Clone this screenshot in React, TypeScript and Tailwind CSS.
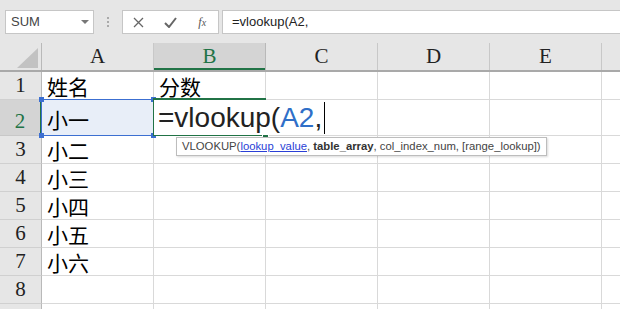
import React from "react";

const cols = ["A", "B", "C", "D", "E"];
const data: { n: string; a: string; b?: string }[] = [
  { n: "3", a: "小二" },
  { n: "4", a: "小三" },
  { n: "5", a: "小四" },
  { n: "6", a: "小五" },
  { n: "7", a: "小六" },
  { n: "8", a: "" },
];

const cjk = "font-['Noto_Sans_CJK_SC',sans-serif]";
const serif = "font-['Liberation_Serif','Noto_Sans_CJK_SC',serif]";

function Cell({ children, className = "" }: { children?: React.ReactNode; className?: string }) {
  return (
    <div className={`w-[112px] shrink-0 border-r border-b border-[#d9d9d9] bg-white flex items-end pl-[5px] text-[21px] leading-[26px] text-black ${cjk} ${className}`}>
      {children}
    </div>
  );
}

function RowHead({ n, active = false }: { n: string; active?: boolean }) {
  return (
    <div
      className={`w-[42px] shrink-0 flex items-end justify-center pb-[1px] text-[21px] leading-[26px] ${serif} border-b ${
        active
          ? "bg-[#d4d4d4] text-[#217346] border-r-2 border-r-[#217346] border-b-[#c8c8c8]"
          : "bg-[#e6e6e6] text-[#222] border-r border-r-[#b9b9b9] border-b-[#d0d0d0]"
      }`}
    >
      {n}
    </div>
  );
}

function Handle({ className }: { className: string }) {
  return <div className={`absolute w-[5px] h-[5px] bg-[#3c6fd1] ${className}`} />;
}

export default function App() {
  return (
    <div className="relative w-[620px] h-[309px] overflow-hidden bg-[#e6e6e6] font-['Liberation_Sans',sans-serif]">
      {/* Toolbar */}
      <div className="h-[43px] flex items-start pt-[10px]">
        <div className="ml-[5px] w-[89px] h-[24px] bg-white border border-[#c6c6c6] flex items-center justify-between pl-[5px] pr-[4px]">
          <span className="text-[13px] text-[#444]">SUM</span>
          <svg width="8" height="5" viewBox="0 0 8 5"><path d="M0 0h8L4 4z" fill="#777" /></svg>
        </div>
        <div className="w-[28px] h-[24px] flex flex-col items-center justify-center gap-[2px]">
          <div className="w-[2px] h-[2px] bg-[#aaa]" />
          <div className="w-[2px] h-[2px] bg-[#aaa]" />
          <div className="w-[2px] h-[2px] bg-[#aaa]" />
        </div>
        <div className="w-[97px] h-[24px] bg-white border border-[#c6c6c6] flex items-center">
          <div className="w-[32px] flex justify-center">
            <svg width="11" height="11" viewBox="0 0 11 11"><path d="M1 1l9 9M10 1l-9 9" stroke="#666" strokeWidth="1.3" /></svg>
          </div>
          <div className="w-[32px] flex justify-center">
            <svg width="13" height="11" viewBox="0 0 13 11"><path d="M1 6l4 4 7-9" stroke="#666" strokeWidth="2" fill="none" /></svg>
          </div>
          <div className="w-[32px] flex justify-center">
            <span className="font-['Liberation_Serif',serif] italic text-[12px] text-[#555]">f<span className="text-[10px]">x</span></span>
          </div>
        </div>
        <div className="ml-[3px] flex-1 h-[24px] bg-white border border-[#c6c6c6] border-r-0 flex items-center pl-[9px]">
          <span className="text-[13px] text-[#222]">=vlookup(A2,</span>
        </div>
      </div>

      {/* Column header */}
      <div className="flex h-[29px] border-b-2 border-[#a9a9a9]">
        <div className="w-[42px] shrink-0 border-r border-[#b9b9b9] relative">
          <svg className="absolute left-[17px] top-[5px]" width="21" height="20" viewBox="0 0 21 20"><path d="M21 0V20H0z" fill="#c2c2c2" /></svg>
        </div>
        {cols.map((c) => (
          <div
            key={c}
            className={`w-[112px] shrink-0 flex items-center justify-center text-[21px] ${serif} ${
              c === "B"
                ? "bg-[#d4d4d4] text-[#217346] border-r border-[#b9b9b9] shadow-[inset_0_-2px_0_#217346]"
                : "text-[#222] border-r border-[#c8c8c8]"
            }`}
          >
            {c}
          </div>
        ))}
        <div className="flex-1" />
      </div>

      {/* Row 1 */}
      <div className="flex h-[28px]">
        <RowHead n="1" />
        <Cell>姓名</Cell>
        <Cell>分数</Cell>
        <Cell />
        <Cell />
        <Cell />
        <div className="flex-1 bg-white border-b border-[#d9d9d9]" />
      </div>

      {/* Row 2 */}
      <div className="flex h-[36px]">
        <RowHead n="2" active />
        <Cell className="relative !bg-[#e8eef8] pb-[3px]">
          小一
          <div className="absolute -left-px -top-px right-[-1px] bottom-[-1px] border border-[#3c6fd1]" />
          <Handle className="-left-[3px] -top-[3px]" />
          <Handle className="-right-[3px] -top-[3px]" />
          <Handle className="-left-[3px] -bottom-[3px]" />
          <Handle className="-right-[3px] -bottom-[3px]" />
        </Cell>
        <Cell className="relative z-10 !pl-0">
          <div className="absolute -left-px -top-[2px] right-[-1px] bottom-[-1px] border-2 border-r-0 border-[#217346]" />
          <div className="absolute right-[-4px] bottom-[-4px] w-[7px] h-[7px] bg-[#217346] border border-white" />
          <div className="relative flex items-end h-full pl-[4px] bg-white pr-[2px] whitespace-nowrap font-['Liberation_Sans',sans-serif] text-[28px] leading-[34px] text-[#222]">
            <span>=vlookup(</span>
            <span className="text-[#2f6fc8]">A2</span>
            <span>,</span>
            <span className="ml-[2px] w-px h-[32px] bg-black self-center" />
          </div>
        </Cell>
        <Cell />
        <Cell />
        <Cell />
        <div className="flex-1 bg-white border-b border-[#d9d9d9]" />
      </div>

      {data.map((r) => (
        <div key={r.n} className="flex h-[28px]">
          <RowHead n={r.n} />
          <Cell>{r.a}</Cell>
          <Cell />
          <Cell />
          <Cell />
          <Cell />
          <div className="flex-1 bg-white border-b border-[#d9d9d9]" />
        </div>
      ))}
      <div className="flex h-[28px]">
        <div className="w-[42px] shrink-0 bg-[#e6e6e6] border-r border-[#b9b9b9]" />
        <div className="w-[112px] shrink-0 bg-white border-r border-[#d9d9d9]" />
        <div className="w-[112px] shrink-0 bg-white border-r border-[#d9d9d9]" />
        <div className="w-[112px] shrink-0 bg-white border-r border-[#d9d9d9]" />
        <div className="w-[112px] shrink-0 bg-white border-r border-[#d9d9d9]" />
        <div className="w-[112px] shrink-0 bg-white border-r border-[#d9d9d9]" />
        <div className="flex-1 bg-white" />
      </div>

      {/* Tooltip */}
      <div className="absolute left-[176px] top-[137px] z-20 h-[19px] bg-white border border-[#bdbdbd] shadow-[1px_1px_2px_rgba(0,0,0,0.15)] flex items-center px-[5px] whitespace-nowrap text-[11.3px] text-[#444]">
        <span>VLOOKUP(</span>
        <span className="text-[#2a3fd6] underline">lookup_value</span>
        <span>,&nbsp;</span>
        <span className="font-bold text-[#333]">table_array</span>
        <span>, col_index_num, [range_lookup])</span>
      </div>
    </div>
  );
}
